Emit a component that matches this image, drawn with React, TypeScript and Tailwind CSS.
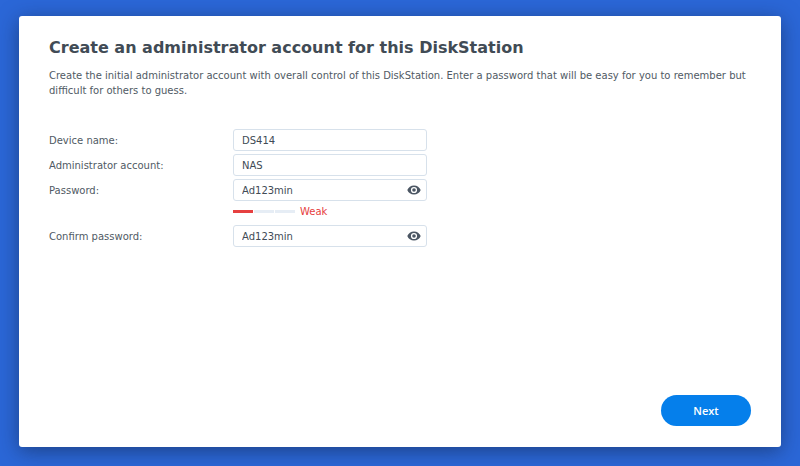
import { useState } from 'react';
import type { ReactNode } from 'react';

function EyeIcon() {
  return (
    <svg viewBox="0 0 14 10" className="h-[10px] w-[14px]" aria-hidden="true">
      <path
        fill="#4b5663"
        fillRule="evenodd"
        d="M7 .4C3.900.4 1.400 2.200.3 5c1.100 2.800 3.600 4.600 6.700 4.600S12.600 7.800 13.700 5C12.600 2.200 10.100.4 7 .4Zm0 7.700a3.100 3.100 0 1 1 0-6.200 3.100 3.100 0 0 1 0 6.200Z"
      />
      <circle cx="7" cy="5" r="1.800" fill="#4b5663" />
    </svg>
  );
}

function Row({ id, label, children }: { id: string; label: string; children: ReactNode }) {
  return (
    <div className="flex items-center">
      <label htmlFor={id} className="w-[184px] shrink-0">
        {label}
      </label>
      <div className="w-[194px]">{children}</div>
    </div>
  );
}

const inputClass =
  'block h-[22px] w-full rounded-[3px] border border-[#d7e1eb] bg-white px-2 text-[#414b55] outline-none focus:border-[#057feb]';

function PasswordInput({ id, value, onChange }: { id: string; value: string; onChange: (v: string) => void }) {
  const [visible, setVisible] = useState(true);
  return (
    <div className="relative">
      <input
        id={id}
        type={visible ? 'text' : 'password'}
        value={value}
        onChange={(e) => onChange(e.target.value)}
        className={inputClass}
      />
      <button
        type="button"
        aria-label="Show or hide password"
        onClick={() => setVisible(!visible)}
        className="absolute inset-y-0 right-0 flex items-center px-[6px]"
      >
        <EyeIcon />
      </button>
    </div>
  );
}

export default function App() {
  const [device, setDevice] = useState('DS414');
  const [account, setAccount] = useState('NAS');
  const [password, setPassword] = useState('Ad123min');
  const [confirm, setConfirm] = useState('Ad123min');

  return (
    <div className="flex min-h-screen bg-[#2b67d7] px-[19px] pt-4 pb-[19px] font-['DejaVu_Sans',Verdana,sans-serif] text-[10px] leading-[15px] text-[#505a64]">
      <form
        onSubmit={(e) => e.preventDefault()}
        className="flex flex-1 flex-col rounded-[3px] bg-white px-[30px] pt-5 pb-[21px] shadow-[0_4px_20px_rgba(20,40,80,0.6)]"
      >
        <h1 className="text-base leading-6 font-bold text-[#414b55]">
          Create an administrator account for this DiskStation
        </h1>
        <p className="mt-2">
          Create the initial administrator account with overall control of this DiskStation. Enter a password that will
          be easy for you to remember but difficult for others to guess.
        </p>

        <div className="mt-[31px] flex flex-col gap-[3px]">
          <Row id="device" label="Device name:">
            <input id="device" value={device} onChange={(e) => setDevice(e.target.value)} className={inputClass} />
          </Row>
          <Row id="account" label="Administrator account:">
            <input id="account" value={account} onChange={(e) => setAccount(e.target.value)} className={inputClass} />
          </Row>
          <Row id="password" label="Password:">
            <PasswordInput id="password" value={password} onChange={setPassword} />
          </Row>
          {/* Strength meter, one of three bars filled */}
          <div className="mb-[3px] ml-[184px] flex items-center gap-px text-[#e64040]">
            <span className="h-[3px] w-5 bg-[#e64040]" />
            <span className="h-[3px] w-5 bg-[#e6edf5]" />
            <span className="h-[3px] w-5 bg-[#e6edf5]" />
            <span className="ml-1">Weak</span>
          </div>
          <Row id="confirm" label="Confirm password:">
            <PasswordInput id="confirm" value={confirm} onChange={setConfirm} />
          </Row>
        </div>

        <div className="mt-auto flex justify-end">
          <button
            type="submit"
            className="h-[31px] w-[90px] rounded-full bg-[#057feb] font-['Open_Sans',sans-serif] text-[11px] font-semibold text-white"
          >
            Next
          </button>
        </div>
      </form>
    </div>
  );
}
